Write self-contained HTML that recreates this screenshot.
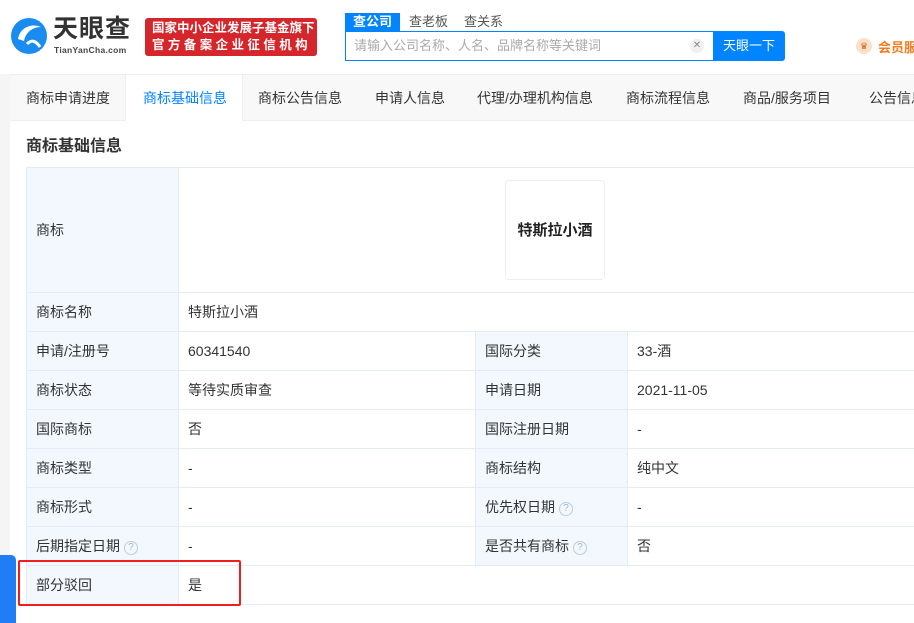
<!DOCTYPE html>
<html><head><meta charset="utf-8"><style>
*{margin:0;padding:0;box-sizing:border-box}
body{width:914px;height:623px;overflow:hidden;background:#fff;font-family:"Liberation Sans","Noto Sans CJK SC",sans-serif;color:#333;position:relative}
.hdr{position:absolute;left:0;top:0;width:914px;height:74px;background:#fff}
.side{position:absolute;left:0;top:74px;width:10px;height:549px;background:#f5f5f5}
.tabs{position:absolute;left:10px;top:74px;width:904px;height:47px;background:#f8f8f8;border-bottom:1px solid #eee;border-top:1px solid #eee}
.tab{position:absolute;top:0;height:46px;line-height:46px;font-size:14px;color:#333}
.tab.on{background:#fff;color:#0084ff;border-left:1px solid #eee;border-right:1px solid #eee}
h3{position:absolute;left:26px;top:132px;font-size:16px;font-weight:bold;color:#333}
table{position:absolute;left:26px;top:167px;border-collapse:collapse;font-size:14px;table-layout:fixed;width:900px}
td{border:1px solid #e4ecf3;height:39px;padding:0 9px;color:#333;white-space:nowrap}
td.l{background:#f2f8fe}
.q{display:inline-block;width:14px;height:14px;border:1px solid #bcd;border-radius:50%;color:#9bc;font-size:10px;text-align:center;line-height:12px;margin-left:4px;vertical-align:1px}
</style></head><body>
<div class="hdr">
<svg style="position:absolute;left:10px;top:17px" width="38" height="38" viewBox="0 0 38 38"><circle cx="19" cy="19" r="18" fill="#1a8cf0"/><path d="M8 22 C10 10 22 6 31 10 C24 10 16 14 14 24 Z" fill="#fff"/><path d="M17 27 C22 22 26 24 30 30" stroke="#fff" stroke-width="3" fill="none"/></svg>
<div style="position:absolute;left:53px;top:16px;font-size:25px;font-weight:bold;color:#333;letter-spacing:1px;line-height:26px">天眼查</div>
<div style="position:absolute;left:54px;top:45px;font-size:8.5px;color:#444;font-weight:bold;letter-spacing:0.3px">TianYanCha.com</div>
<div style="position:absolute;left:145px;top:18px;width:172px;height:38px;background:#d4262b;border-radius:3px;color:#fff;font-size:12.5px;line-height:17px;padding:2px 0 0 7px;font-weight:bold">国家中小企业发展子基金旗下<br><span style="letter-spacing:3.4px">官方备案企业征信机构</span></div>
<div style="position:absolute;left:345px;top:13px;width:55px;height:18px;background:#0084ff;color:#fff;font-size:13px;text-align:center;line-height:18px;font-weight:bold">查公司</div>
<div style="position:absolute;left:409px;top:13px;font-size:13px;color:#555;line-height:18px">查老板</div>
<div style="position:absolute;left:464px;top:13px;font-size:13px;color:#555;line-height:18px">查关系</div>
<div style="position:absolute;left:345px;top:31px;width:368px;height:30px;border:1px solid #0084ff;border-right:none;color:#aaa;font-size:13px;line-height:28px;padding-left:8px">请输入公司名称、人名、品牌名称等关键词<span style="position:absolute;left:344px;top:7px;width:14px;height:14px;border-radius:50%;background:#f0f0f0;color:#888;font-size:10px;line-height:14px;text-align:center">✕</span></div>
<div style="position:absolute;left:713px;top:31px;width:72px;height:30px;background:#0084ff;border-radius:0 3px 3px 0;color:#fff;font-size:13px;line-height:30px;text-align:center">天眼一下</div>
<div style="position:absolute;left:856px;top:38px;width:16px;height:16px;border-radius:50%;background:#fde0c8;color:#c8641e;font-size:9px;text-align:center;line-height:16px">♛</div>
<div style="position:absolute;left:878px;top:37px;font-size:13px;color:#f47a20;font-weight:bold;white-space:nowrap">会员服务</div>
</div>
<div class="side"></div>
<div class="tabs">
<div class="tab" style="left:16px">商标申请进度</div>
<div class="tab on" style="left:115px;width:118px;padding-left:17px">商标基础信息</div>
<div class="tab" style="left:248px">商标公告信息</div>
<div class="tab" style="left:365px">申请人信息</div>
<div class="tab" style="left:467px">代理/办理机构信息</div>
<div class="tab" style="left:616px">商标流程信息</div>
<div class="tab" style="left:733px">商品/服务项目</div>
<div class="tab" style="left:859px;white-space:nowrap">公告信息</div>
</div>
<h3>商标基础信息</h3>
<table>
<colgroup><col style="width:152px"><col style="width:297px"><col style="width:152px"><col style="width:299px"></colgroup>
<tr><td class="l" style="height:125px">商标</td><td colspan="3" style="position:relative"><div style="position:absolute;left:326px;top:12px;width:100px;height:100px;border:1px solid #eee;border-radius:4px;text-align:center;line-height:100px;font-weight:bold;font-size:15px;color:#222">特斯拉小酒</div></td></tr>
<tr><td class="l">商标名称</td><td colspan="3">特斯拉小酒</td></tr>
<tr><td class="l">申请/注册号</td><td>60341540</td><td class="l">国际分类</td><td>33-酒</td></tr>
<tr><td class="l">商标状态</td><td>等待实质审查</td><td class="l">申请日期</td><td>2021-11-05</td></tr>
<tr><td class="l">国际商标</td><td>否</td><td class="l">国际注册日期</td><td>-</td></tr>
<tr><td class="l">商标类型</td><td>-</td><td class="l">商标结构</td><td>纯中文</td></tr>
<tr><td class="l">商标形式</td><td>-</td><td class="l">优先权日期<span class="q">?</span></td><td>-</td></tr>
<tr><td class="l">后期指定日期<span class="q">?</span></td><td>-</td><td class="l">是否共有商标<span class="q">?</span></td><td>否</td></tr>
<tr><td class="l">部分驳回</td><td colspan="3">是</td></tr>
</table>
<div style="position:absolute;left:18px;top:560px;width:223px;height:46px;border:2px solid #f01e1e;border-radius:2px"></div>
<div style="position:absolute;left:0;top:555px;width:16px;height:68px;background:#1f7ef5;border-radius:0 5px 0 0"></div>
</body></html>
